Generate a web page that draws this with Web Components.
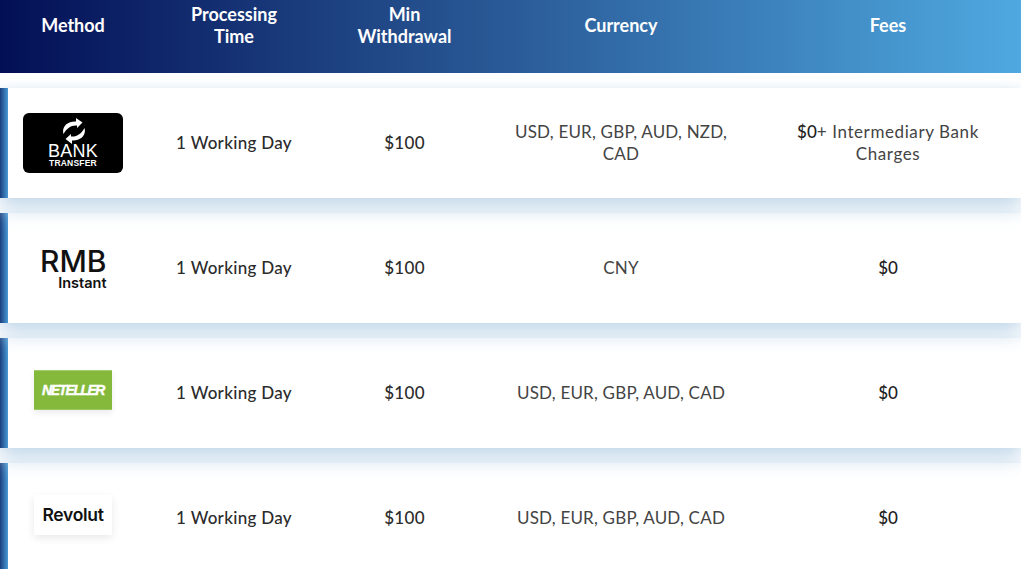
<!DOCTYPE html>
<html lang="en">
<head>
<meta charset="utf-8">
<title>Withdrawal methods</title>
<style>
  html, body { margin: 0; padding: 0; height: 569px; overflow: hidden; background: #fff; }
  body { font-family: "Lato", "Open Sans", sans-serif; color: #2b2b2b; }
  method-row b { font-weight: 500; color: #222; letter-spacing: 0; }
</style>
</head>
<body>
<method-table>
  <table-head></table-head>
  <method-row time="1 Working Day" min="$100" currency="USD, EUR, GBP, AUD, NZD, CAD">
    <bank-logo slot="logo"></bank-logo>
    <span slot="fees"><b>$0</b>+ Intermediary Bank Charges</span>
  </method-row>
  <method-row time="1 Working Day" min="$100" currency="CNY">
    <rmb-logo slot="logo"></rmb-logo>
    <span slot="fees"><b>$0</b></span>
  </method-row>
  <method-row time="1 Working Day" min="$100" currency="USD, EUR, GBP, AUD, CAD">
    <neteller-logo slot="logo"></neteller-logo>
    <span slot="fees"><b>$0</b></span>
  </method-row>
  <method-row time="1 Working Day" min="$100" currency="USD, EUR, GBP, AUD, CAD">
    <revolut-logo slot="logo"></revolut-logo>
    <span slot="fees"><b>$0</b></span>
  </method-row>
</method-table>

<script>
const COLUMNS = '146px 176px 165px 268px 266px';

class MethodTable extends HTMLElement {
  constructor() {
    super();
    this.attachShadow({ mode: 'open' }).innerHTML = `
      <style>
        :host { display: flex; flex-direction: column; gap: 15px; width: 1021px; }
      </style>
      <slot></slot>`;
  }
}

class TableHead extends HTMLElement {
  constructor() {
    super();
    this.attachShadow({ mode: 'open' }).innerHTML = `
      <style>
        :host {
          display: grid;
          grid-template-columns: ${COLUMNS};
          height: 73px;
          box-sizing: border-box;
          padding-bottom: 23px;
          align-items: center;
          text-align: center;
          color: #fff;
          font-size: 18px;
          font-weight: 700;
          line-height: 22px;
          background: linear-gradient(90deg, #030f55 0%, #2a5b98 50%, #4fa9e0 100%);
        }
      </style>
      <div>Method</div>
      <div>Processing<br>Time</div>
      <div>Min<br>Withdrawal</div>
      <div>Currency</div>
      <div>Fees</div>`;
  }
}

class MethodRow extends HTMLElement {
  constructor() {
    super();
    this.attachShadow({ mode: 'open' }).innerHTML = `
      <style>
        :host {
          display: grid;
          grid-template-columns: ${COLUMNS};
          height: 110px;
          align-items: center;
          text-align: center;
          position: relative;
          background: #fff;
          box-shadow: 0 10px 20px #c3d8ea, 0 0 8px rgba(197, 217, 234, .3);
          font-size: 17px;
          line-height: 22px;
        }
        :host::before {
          content: "";
          position: absolute;
          left: 0; top: 0; bottom: 0;
          width: 8px;
          background: linear-gradient(90deg, #1a3f7e, #4a9ad6);
        }
        .logo { display: flex; justify-content: center; }
        .strong { font-weight: 500; letter-spacing: .3px; }
        .light { font-weight: 400; color: #444; padding: 0 20px; }
        #currency { letter-spacing: .2px; }
        ::slotted(span) { font-weight: 400; letter-spacing: .6px; }
      </style>
      <div class="logo"><slot name="logo"></slot></div>
      <div class="strong" id="time"></div>
      <div class="strong" id="min"></div>
      <div class="light" id="currency"></div>
      <div class="light"><slot name="fees"></slot></div>`;
  }

  connectedCallback() {
    for (const id of ['time', 'min', 'currency']) {
      this.shadowRoot.getElementById(id).textContent = this.getAttribute(id);
    }
    // the shadow of a row falls over the top of the next one
    const siblings = [...this.parentElement.children];
    this.style.zIndex = siblings.length - siblings.indexOf(this);
  }
}

class BankLogo extends HTMLElement {
  constructor() {
    super();
    this.attachShadow({ mode: 'open' }).innerHTML = `
      <style>
        :host {
          display: flex;
          flex-direction: column;
          align-items: center;
          box-sizing: border-box;
          width: 100px; height: 60px;
          padding-top: 5px;
          background: #000;
          border-radius: 6px;
          color: #fff;
          font-family: "Liberation Sans", sans-serif;
        }
        svg { display: block; margin-left: 2px; }
        .bank { font-size: 18px; line-height: 15px; letter-spacing: .2px; }
        .transfer { font-size: 8.5px; line-height: 9px; font-weight: 700; letter-spacing: .2px; }
      </style>
      <svg width="24" height="26" viewBox="0 0 24 26" fill="#fff">
        <path d="M14 0 L20.5 4.5 L15 10 L15 7.5 C9 7 5 10 1.5 16 C-.5 9 5 3 14 3.5 Z"/>
        <path d="M10 26 L3.5 21 L9 16 L9 18.5 C15 19 19 16 22.5 10 C24.5 17 19 23 10 22.5 Z"/>
      </svg>
      <div class="bank">BANK</div>
      <div class="transfer">TRANSFER</div>`;
  }
}

class RmbLogo extends HTMLElement {
  constructor() {
    super();
    this.attachShadow({ mode: 'open' }).innerHTML = `
      <style>
        :host {
          display: flex;
          flex-direction: column;
          align-items: flex-end;
          width: 67px;
          margin-top: 2px;
          color: #111;
          font-family: "Inter", sans-serif;
        }
        .rmb { font-size: 30px; line-height: 25px; font-weight: 500; }
        .instant { font-size: 14.5px; line-height: 15px; margin-top: 1px; font-weight: 600; }
      </style>
      <div class="rmb">RMB</div>
      <div class="instant">Instant</div>`;
  }
}

class NetellerLogo extends HTMLElement {
  constructor() {
    super();
    this.attachShadow({ mode: 'open' }).innerHTML = `
      <style>
        :host {
          display: flex;
          align-items: center;
          justify-content: center;
          box-sizing: border-box;
          width: 78px; height: 40px;
          margin-bottom: 6px;
          background: #84b93b;
          border-top: 1px solid #a5cc70;
          border-bottom: 1px solid #9cc662;
          box-shadow: 0 3px 6px rgba(0, 0, 0, .08);
          color: #fff;
          font-family: "Liberation Sans", sans-serif;
          font-size: 14px;
          font-weight: 700;
          font-style: italic;
          letter-spacing: -1.5px;
          -webkit-text-stroke: .4px #fff;
        }
      </style>
      NETELLER`;
  }
}

class RevolutLogo extends HTMLElement {
  constructor() {
    super();
    this.attachShadow({ mode: 'open' }).innerHTML = `
      <style>
        :host {
          display: flex;
          align-items: center;
          justify-content: center;
          width: 78px; height: 40px;
          margin-bottom: 6px;
          background: #fff;
          box-shadow: 0 3px 8px rgba(0, 0, 0, .09);
          color: #111;
          font-family: "Inter", sans-serif;
          font-size: 17.5px;
          font-weight: 600;
          letter-spacing: -.3px;
        }
      </style>
      Revolut`;
  }
}

customElements.define('method-table', MethodTable);
customElements.define('table-head', TableHead);
customElements.define('method-row', MethodRow);
customElements.define('bank-logo', BankLogo);
customElements.define('rmb-logo', RmbLogo);
customElements.define('neteller-logo', NetellerLogo);
customElements.define('revolut-logo', RevolutLogo);
</script>
</body>
</html>
